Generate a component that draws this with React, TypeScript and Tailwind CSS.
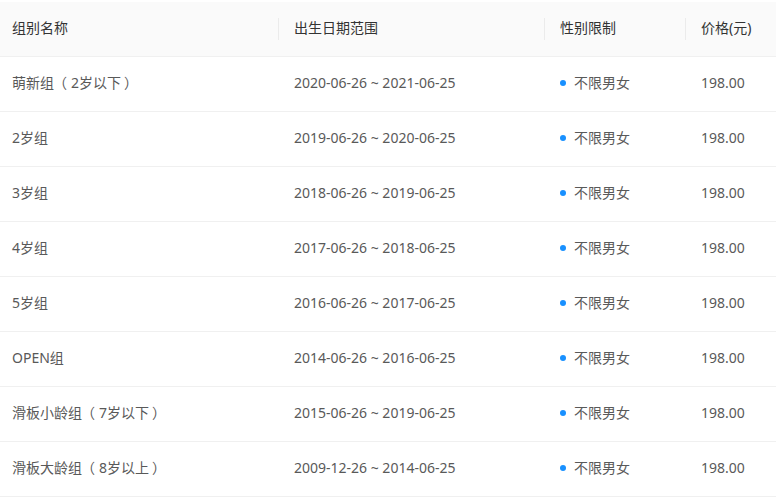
const rows = [
  { name: '萌新组（2岁以下）', range: '2020-06-26 ~ 2021-06-25' },
  { name: '2岁组', range: '2019-06-26 ~ 2020-06-25' },
  { name: '3岁组', range: '2018-06-26 ~ 2019-06-25' },
  { name: '4岁组', range: '2017-06-26 ~ 2018-06-25' },
  { name: '5岁组', range: '2016-06-26 ~ 2017-06-25' },
  { name: 'OPEN组', range: '2014-06-26 ~ 2016-06-25' },
  { name: '滑板小龄组（7岁以下）', range: '2015-06-26 ~ 2019-06-25' },
  { name: '滑板大龄组（8岁以上）', range: '2009-12-26 ~ 2014-06-25' },
];

const cols = 'grid grid-cols-[282px_266px_141px_1fr]';

// 全角括号两侧补一点间距
const renderName = (name: string) =>
  name.split(/([（）])/).map((part, i) =>
    part === '（' ? (
      <span key={i} className="-ml-[1px] mr-[4px]">
        {part}
      </span>
    ) : part === '）' ? (
      <span key={i} className="ml-[3px]">
        {part}
      </span>
    ) : (
      part
    ),
  );

export default function App() {
  return (
    <div
      className="w-[776px] h-[500px] overflow-hidden bg-white pt-[2px] text-[14px]"
      style={{ fontFamily: '"Noto Sans", "Noto Sans CJK SC", sans-serif' }}
    >
      <div className="-ml-1 w-[780px]">
        {/* 表头 */}
        <div className={`${cols} h-[55px] bg-[#fafafa] border-b border-[#f0f0f0] text-[#333]`}>
          <div className="flex items-center px-4 pb-[3px]">组别名称</div>
          <div className="relative flex items-center px-4 pb-[3px] before:absolute before:left-0 before:top-[16px] before:h-[22px] before:w-px before:bg-[#ebebeb]">
            出生日期范围
          </div>
          <div className="relative flex items-center px-4 pb-[3px] before:absolute before:left-0 before:top-[16px] before:h-[22px] before:w-px before:bg-[#ebebeb]">
            性别限制
          </div>
          <div className="relative flex items-center px-4 pb-[3px] before:absolute before:left-0 before:top-[16px] before:h-[22px] before:w-px before:bg-[#ebebeb]">
            价格(元)
          </div>
        </div>

        {/* 数据行 */}
        {rows.map((row) => (
          <div key={row.name} className={`${cols} h-[55px] border-b border-[#f0f0f0] text-[#595959]`}>
            <div className="flex items-center px-4 pb-[3px] whitespace-pre">{renderName(row.name)}</div>
            <div className="flex items-center px-4 pb-[3px]">{row.range}</div>
            <div className="flex items-center gap-2 px-4 pb-[3px]">
              <span className="h-[6px] w-[6px] rounded-full bg-[#1890ff]" />
              不限男女
            </div>
            <div className="flex items-center px-4 pb-[3px]">198.00</div>
          </div>
        ))}
      </div>
    </div>
  );
}
